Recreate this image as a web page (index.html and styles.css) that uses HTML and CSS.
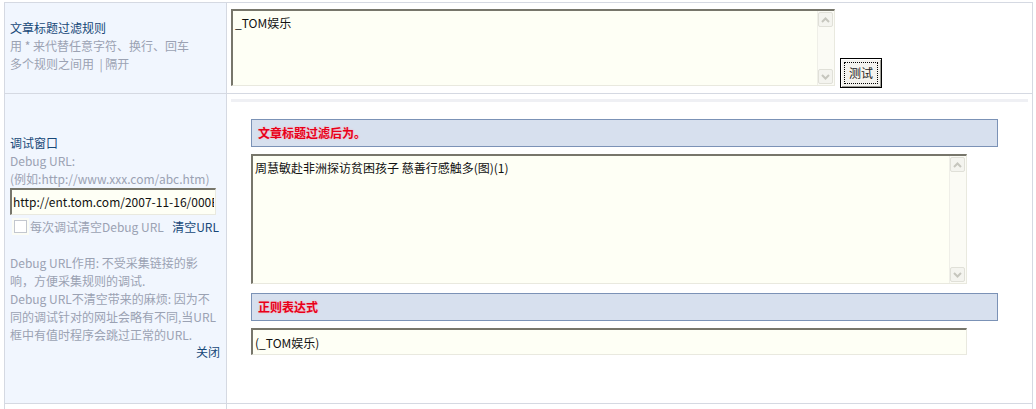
FILE: index.html
```html
<!DOCTYPE html>
<html lang="zh-CN">

<head>
    <meta charset="UTF-8">
    <title>采集规则 - 文章标题过滤</title>
    <link rel="stylesheet" href="styles.css">
</head>

<body>
    <div class="form">
        <div class="cell label">
            <div class="label-title">文章标题过滤规则</div>
            <div class="hint">用 * 来代替任意字符、换行、回车</div>
            <div class="hint">多个规则之间用 &nbsp;| 隔开</div>
        </div>
        <div class="cell field field-rule">
            <div class="area area-rule">
                <textarea>_TOM娱乐</textarea>
                <div class="vscroll">
                    <span class="sbtn"><svg width="9" height="6" viewBox="0 0 9 6"><polyline points="1,5 4.5,1.5 8,5" /></svg></span>
                    <span class="sbtn"><svg width="9" height="6" viewBox="0 0 9 6"><polyline points="1,1 4.5,4.5 8,1" /></svg></span>
                </div>
            </div>
            <button class="btn" type="button"><span>测试</span></button>
        </div>

        <div class="cell label debug">
            <div class="label-title">调试窗口</div>
            <div class="hint">Debug URL:</div>
            <div class="hint">(例如:http://www.xxx.com/abc.htm)</div>
            <input class="text debug-url" type="text" value="http://ent.tom.com/2007-11-16/000E1234/abc.html">
            <div class="check-row">
                <span class="checkbox"></span>
                <span class="hint">每次调试清空Debug URL</span>
                <a class="link" href="#">清空URL</a>
            </div>
            <div class="hint note">
                Debug URL作用: 不受采集链接的影<br>
                响，方便采集规则的调试.<br>
                Debug URL不清空带来的麻烦: 因为不<br>
                同的调试针对的网址会略有不同,当URL<br>
                框中有值时程序会跳过正常的URL.
            </div>
            <div class="close"><a class="link" href="#">关闭</a></div>
        </div>
        <div class="cell field field-result">
            <div class="rule-sep"></div>
            <div class="result">
                <div class="result-head">文章标题过滤后为。</div>
                <div class="area area-result">
                    <textarea>周慧敏赴非洲探访贫困孩子 慈善行感触多(图)(1)</textarea>
                    <div class="vscroll">
                        <span class="sbtn"><svg width="9" height="6" viewBox="0 0 9 6"><polyline points="1,5 4.5,1.5 8,5" /></svg></span>
                        <span class="sbtn"><svg width="9" height="6" viewBox="0 0 9 6"><polyline points="1,1 4.5,4.5 8,1" /></svg></span>
                    </div>
                </div>
                <div class="result-head">正则表达式</div>
                <input class="text regex" type="text" value="(_TOM娱乐)">
            </div>
        </div>

        <div class="cell blank"></div>
        <div class="cell blank"></div>
    </div>
</body>

</html>
```

FILE: styles.css
```css
html,
body {
    overflow: hidden;
}

body {
    margin: 0;
    padding: 2px 0 0 4px;
    font-family: "Noto Sans CJK SC", "Liberation Sans", sans-serif;
    font-size: 12px;
    line-height: 18px;
    color: #000;
    background: #fff;
}

.form {
    display: grid;
    grid-template-columns: 222px 806px;
    grid-template-rows: 91px 310px 20px;
    width: 1029px;
    box-sizing: border-box;
    border-top: 1px solid #d5d9e2;
    border-left: 1px solid #d5d9e2;
}

.cell {
    box-sizing: border-box;
    border-right: 1px solid #d5d9e2;
    border-bottom: 1px solid #d5d9e2;
}

.label {
    display: flex;
    flex-direction: column;
    justify-content: center;
    padding: 0 6px 4px 5px;
    background-color: #f1f6fe;
}

.label-title {
    color: #174878;
}

.hint {
    color: #9ba2b3;
}

.link {
    color: #174878;
    text-decoration: none;
}

/* textareas with the old inset look */
.area {
    display: flex;
    box-sizing: border-box;
    border-top: 2px solid #77766b;
    border-left: 2px solid #77766b;
    border-right: 1px solid #e9e9df;
    border-bottom: 1px solid #e9e9df;
    background-color: #fefff5;
}

.area textarea {
    flex: 1;
    margin: 0;
    padding: 3px 2px;
    border: 0;
    background: transparent;
    font: inherit;
    color: #111;
    resize: none;
    outline: none;
    overflow: hidden;
}

.vscroll {
    display: flex;
    flex-direction: column;
    justify-content: space-between;
    width: 16px;
    padding: 1px 0;
    border-left: 1px solid #efefe8;
    background-color: #fbfbf5;
}

.sbtn {
    display: flex;
    align-items: center;
    justify-content: center;
    width: 15px;
    height: 15px;
    box-sizing: border-box;
    border: 1px solid #e0e0d8;
    border-radius: 2px;
    background-color: #f4f4ef;
}

.sbtn polyline {
    fill: none;
    stroke: #c6c6be;
    stroke-width: 2;
}

.text {
    display: block;
    box-sizing: border-box;
    margin: 0;
    padding: 0 2px;
    border-top: 2px solid #77766b;
    border-left: 2px solid #77766b;
    border-right: 1px solid #e9e9df;
    border-bottom: 1px solid #e9e9df;
    background-color: #fefff5;
    font: inherit;
    color: #111;
    outline: none;
}

/* row 1 */
.field-rule {
    display: flex;
    align-items: flex-end;
    padding: 0 0 7px 4px;
}

.area-rule {
    width: 604px;
    height: 77px;
}

.btn {
    width: 42px;
    height: 30px;
    margin: 0 0 -2px 5px;
    padding: 3px;
    border: 1px solid #000;
    background-color: #f4f3ee;
    box-shadow: inset 1px 1px #fff, inset -1px -1px #9d9d96;
    font: inherit;
    color: #222;
    cursor: pointer;
}

.btn span {
    display: block;
    border: 1px dotted #000;
    line-height: 20px;
}

/* row 2 */
.debug-url {
    width: 206px;
    height: 27px;
    padding: 0 1px;
}

.check-row {
    display: flex;
    align-items: center;
    margin-top: 3px;
}

.checkbox {
    width: 13px;
    height: 13px;
    box-sizing: border-box;
    margin: 0 3px 0 4px;
    border: 1px solid #c3c7cf;
    background-color: #fff;
    box-shadow: 0 0 0 2px #fbfcf5;
}

.check-row .link {
    margin: 0 1px 0 auto;
}

.note {
    margin-top: 18px;
}

.close {
    text-align: right;
    line-height: 16px;
}

.field-result {
    padding: 5px 4px 0 4px;
}

.rule-sep {
    height: 3px;
    background-color: #eff0f4;
}

.result {
    margin: 17px 0 0 20px;
}

.result-head {
    width: 747px;
    height: 28px;
    box-sizing: border-box;
    padding-left: 6px;
    border: 1px solid #7b92b6;
    background-color: #d7e0ee;
    line-height: 26px;
    font-weight: bold;
    color: #e8001a;
    text-shadow: 0 0 2px #f7a9b2;
}

.area-result {
    width: 716px;
    height: 130px;
    margin: 7px 0 9px;
}

.regex {
    width: 716px;
    height: 27px;
    margin-top: 7px;
}

.blank {
    background-color: #fff;
}
```
